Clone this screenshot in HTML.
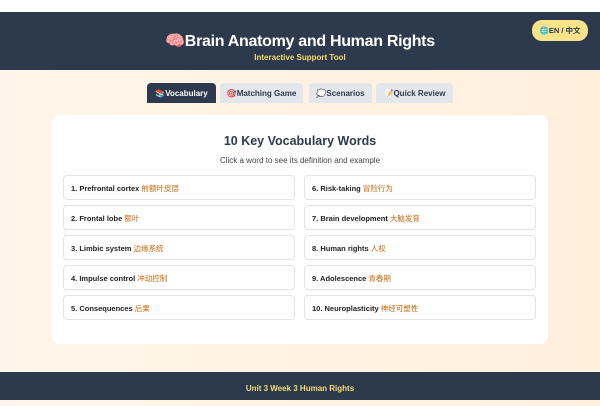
<!DOCTYPE html>
<html><head><meta charset="utf-8"><style>
*{margin:0;padding:0;box-sizing:border-box}
body{width:600px;height:400px;overflow:hidden;font-family:"Liberation Sans","Noto Sans CJK SC",sans-serif;background:linear-gradient(90deg,#fff5ea,#fff0dc);position:relative}
.top{position:absolute;left:0;top:0;width:600px;height:12px;background:#fff}
.hdr{position:absolute;left:0;top:12px;width:600px;height:58px;background:#2d3a4d;text-align:center;color:#fff}
.hdr h1{font-size:16px;font-weight:bold;margin-top:19px;letter-spacing:-0.3px}
.hdr .sub{font-size:8px;color:#f6dc6b;margin-top:2px;font-weight:bold}
.lang{position:absolute;left:532px;top:20px;width:56px;height:21px;border-radius:10px;background:#fbe38a;color:#2d3a4d;font-size:7.5px;font-weight:bold;line-height:21px;text-align:center}
.tab{position:absolute;top:83px;height:20px;border-radius:4px 4px 0 0;background:#e3e6ea;color:#2d3a4d;font-size:8px;font-weight:bold;line-height:22px;text-align:center}
.tab.on{background:#2d3a4d;color:#fff}
.box{position:absolute;left:52px;top:115px;width:496px;height:229px;background:#fff;border-radius:8px}
.box h2{text-align:center;font-size:12.5px;color:#2d3a4d;margin-top:19px}
.box p{text-align:center;font-size:8px;color:#444;margin-top:8px}
.c{position:absolute;width:232px;height:25px;border:1px solid #e4e4e4;border-radius:4px;font-size:7.5px;font-weight:bold;color:#222;line-height:25px;padding-left:7px;background:#fff}
.c b{font-weight:normal;color:#c96a10}
.ftr{position:absolute;left:0;top:372px;width:600px;height:28px;background:#2d3a4d;color:#f6dc6b;font-size:8px;font-weight:bold;text-align:center;line-height:34px}
</style></head><body>
<div class="top"></div>
<div class="hdr"><h1>🧠Brain Anatomy and Human Rights</h1><div class="sub">Interactive Support Tool</div></div>
<div class="lang">🌐EN / 中文</div>
<div class="tab on" style="left:147px;width:69px">📚Vocabulary</div>
<div class="tab" style="left:220px;width:83px">🎯Matching Game</div>
<div class="tab" style="left:309px;width:63px">💭Scenarios</div>
<div class="tab" style="left:376px;width:77px">📝Quick Review</div>
<div class="box"><h2>10 Key Vocabulary Words</h2><p>Click a word to see its definition and example</p></div>
<div class="c" style="left:63px;top:175px">1. Prefrontal cortex <b>前额叶皮层</b></div>
<div class="c" style="left:63px;top:205px">2. Frontal lobe <b>额叶</b></div>
<div class="c" style="left:63px;top:235px">3. Limbic system <b>边缘系统</b></div>
<div class="c" style="left:63px;top:265px">4. Impulse control <b>冲动控制</b></div>
<div class="c" style="left:63px;top:295px">5. Consequences <b>后果</b></div>
<div class="c" style="left:304px;top:175px">6. Risk-taking <b>冒险行为</b></div>
<div class="c" style="left:304px;top:205px">7. Brain development <b>大脑发育</b></div>
<div class="c" style="left:304px;top:235px">8. Human rights <b>人权</b></div>
<div class="c" style="left:304px;top:265px">9. Adolescence <b>青春期</b></div>
<div class="c" style="left:304px;top:295px">10. Neuroplasticity <b>神经可塑性</b></div>
<div class="ftr">Unit 3 Week 3 Human Rights</div>
</body></html>
